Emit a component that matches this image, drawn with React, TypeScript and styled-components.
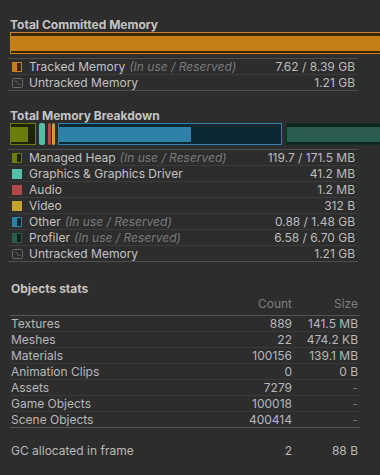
import styled, { createGlobalStyle } from "styled-components";

const GlobalStyle = createGlobalStyle`
  body {
    margin: 0;
    background: #2d2d2d;
    font-family: Inter, "Noto Sans", sans-serif;
    font-size: 12px;
    color: #c2c2c2;
  }
`;

const Page = styled.div`
  width: 380px;
  height: 475px;
  overflow: hidden;
  padding-top: 17px;
  box-sizing: border-box;
`;

const Title = styled.div<{ $top?: number }>`
  margin: ${(p) => p.$top ?? 0}px 0 0 10px;
  height: 15px;
  line-height: 15px;
  font-weight: 700;
  color: #c4c4c4;
  white-space: nowrap;
`;

const Bar = styled.div`
  display: flex;
  gap: 3px;
  margin-left: 10px;
  width: 1600px;
  height: 22px;
`;

const Segment = styled.div<{ $w: number; $edge: string; $dark: string; $gap?: number }>`
  flex: none;
  box-sizing: border-box;
  width: ${(p) => p.$w}px;
  height: 22px;
  margin-left: ${(p) => p.$gap ?? 0}px;
  border: 1px solid ${(p) => p.$edge};
  background: ${(p) => p.$dark};
  padding: 3px 0 2px;
  display: flex;
`;

const Fill = styled.div<{ $color: string }>`
  height: 100%;
  background: ${(p) => p.$color};
`;

const Solid = styled.div<{ $w: number; $color: string; $gap?: number }>`
  flex: none;
  width: ${(p) => p.$w}px;
  height: 22px;
  border-radius: 2px;
  background: ${(p) => p.$color};
  margin-right: ${(p) => p.$gap ?? 0}px;
`;

const List = styled.div`
  margin: 4px 22px 0 8px;
  border-top: 1px solid #4e4e4e;
`;

const Row = styled.div`
  display: flex;
  align-items: center;
  height: 15px;
  padding: 0 3px 0 4px;
  border-bottom: 1px solid #3b3b3b;
  white-space: nowrap;
  &:last-child {
    border-bottom-color: #4e4e4e;
  }
`;

const Label = styled.span`
  flex: 1;
  margin-left: 7px;
  color: #c2c2c2;
`;

const Hint = styled.i`
  color: #7b7b7b;
  margin-left: 4px;
`;

const Value = styled.span`
  color: #bcbcbc;
`;

const Swatch = styled.span<{ $color: string; $dark?: string }>`
  position: relative;
  flex: none;
  width: 10px;
  height: 10px;
  box-sizing: border-box;
  background: ${(p) => p.$color};
  &::after {
    content: "";
    display: ${(p) => (p.$dark ? "block" : "none")};
    position: absolute;
    left: 5px;
    top: 1px;
    width: 4px;
    height: 8px;
    background: ${(p) => p.$dark};
  }
`;

const UntrackedIcon = () => (
  <svg width="11" height="10" viewBox="0 0 11 10" style={{ flex: "none" }}>
    <rect x="0.5" y="0.5" width="10" height="9" rx="1" fill="none" stroke="#6a6a6a" />
    <path d="M2.5 3.2 H4.5 L6.3 6.5 H8.5" fill="none" stroke="#5e5e5e" strokeWidth="1" />
  </svg>
);

const Grid = styled.div`
  display: grid;
  grid-template-columns: 1fr 70px 66px;
  align-items: center;
  height: 15px;
  padding: 0 2px 0 1px;
  white-space: nowrap;
`;

const HeadRow = styled(Grid)`
  margin: 0 20px 4px 10px;
  color: #7e7e7e;
`;

const Table = styled.div`
  margin: 0 20px 0 10px;
  border-top: 1px solid #555;
  border-bottom: 1px solid #555;
`;

const StatRow = styled(Grid)`
  border-bottom: 1px solid #3a3a3a;
  &:last-child {
    border-bottom: none;
  }
`;

const Num = styled.span<{ $dim?: boolean }>`
  text-align: right;
  color: ${(p) => (p.$dim ? "#707070" : "#b8b8b8")};
`;

const Head = styled.span`
  text-align: right;
  color: #7e7e7e;
`;

const Name = styled.span`
  color: #b8b8b8;
`;

const GcRow = styled(Grid)`
  margin: 15px 20px 0 10px;
`;

const breakdown = [
  { name: "Managed Heap", hint: true, value: "119.7 / 171.5 MB", color: "#6b7d0a", dark: "#1e2401" },
  { name: "Graphics & Graphics Driver", value: "41.2 MB", color: "#55c0a7" },
  { name: "Audio", value: "1.2 MB", color: "#b04a4a" },
  { name: "Video", value: "312 B", color: "#c6a22f" },
  { name: "Other", hint: true, value: "0.88 / 1.48 GB", color: "#2e82aa", dark: "#0d2733" },
  { name: "Profiler", hint: true, value: "6.58 / 6.70 GB", color: "#2a5c50", dark: "#0e231e" },
];

const stats: [string, string, string][] = [
  ["Textures", "889", "141.5 MB"],
  ["Meshes", "22", "474.2 KB"],
  ["Materials", "100156", "139.1 MB"],
  ["Animation Clips", "0", "0 B"],
  ["Assets", "7279", "-"],
  ["Game Objects", "100018", "-"],
  ["Scene Objects", "400414", "-"],
];

export default function App() {
  return (
    <Page>
      <GlobalStyle />
      <Title>Total Committed Memory</Title>
      <Bar>
        <Segment $w={1500} $edge="#c7831c" $dark="#3b2708">
          <Fill $color="#c47f17" style={{ width: "100%" }} />
        </Segment>
      </Bar>
      <List>
        <Row>
          <Swatch $color="#c47f17" $dark="#3b2708" />
          <Label>
            Tracked Memory<Hint>(In use / Reserved)</Hint>
          </Label>
          <Value>7.62 / 8.39 GB</Value>
        </Row>
        <Row>
          <UntrackedIcon />
          <Label style={{ marginLeft: 6 }}>Untracked Memory</Label>
          <Value>1.21 GB</Value>
        </Row>
      </List>

      <Title $top={17}>Total Memory Breakdown</Title>
      <Bar>
        <Segment $w={26} $edge="#6b7d0a" $dark="#1e2401">
          <Fill $color="#6b7d0a" style={{ width: "70%" }} />
        </Segment>
        <Solid $w={6} $color="#55c0a7" />
        <Solid $w={3} $color="#b04a4a" $gap={-2} />
        <Solid $w={3} $color="#c6a22f" />
        <Segment $w={224} $edge="#2e82aa" $dark="#0d2733">
          <Fill $color="#2e82aa" style={{ width: `${(0.88 / 1.48) * 100}%` }} />
        </Segment>
        <Segment $w={1012} $gap={1} $edge="#12302a" $dark="#0e231e">
          <Fill $color="#2a5c50" style={{ width: `${(6.58 / 6.7) * 100}%` }} />
        </Segment>
      </Bar>
      <List>
        {breakdown.map((b) => (
          <Row key={b.name}>
            <Swatch $color={b.color} $dark={b.dark} />
            <Label>
              {b.name}
              {b.hint && <Hint>(In use / Reserved)</Hint>}
            </Label>
            <Value>{b.value}</Value>
          </Row>
        ))}
        <Row>
          <UntrackedIcon />
          <Label style={{ marginLeft: 6 }}>Untracked Memory</Label>
          <Value>1.21 GB</Value>
        </Row>
      </List>

      <Title $top={19} style={{ marginLeft: 11 }}>
        Objects stats
      </Title>
      <HeadRow>
        <span />
        <Head>Count</Head>
        <Head>Size</Head>
      </HeadRow>
      <Table>
        {stats.map(([name, count, size]) => (
          <StatRow key={name}>
            <Name>{name}</Name>
            <Num>{count}</Num>
            <Num $dim={size === "-"}>{size}</Num>
          </StatRow>
        ))}
      </Table>
      <GcRow>
        <Name>GC allocated in frame</Name>
        <Num>2</Num>
        <Num>88 B</Num>
      </GcRow>
    </Page>
  );
}
